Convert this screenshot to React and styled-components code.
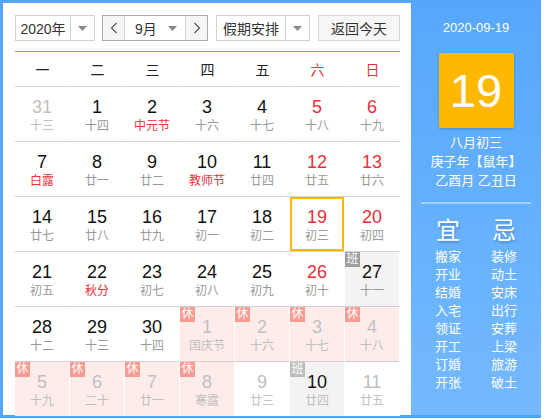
import React from "react";
import styled, { createGlobalStyle } from "styled-components";

const GlobalStyle = createGlobalStyle`
  body {
    margin: 0;
    background: #fff;
    font-family: "Liberation Sans", "Noto Sans CJK SC", sans-serif;
  }
`;

const WEEKDAYS = [
  { label: "一" },
  { label: "二" },
  { label: "三" },
  { label: "四" },
  { label: "五" },
  { label: "六", weekend: true },
  { label: "日", weekend: true },
];

// kind: rest = 休, work = 班 ; other = not in this month
const DAYS = [
  { d: 31, l: "十三", other: true },
  { d: 1, l: "十四" },
  { d: 2, l: "中元节", fest: true },
  { d: 3, l: "十六" },
  { d: 4, l: "十七" },
  { d: 5, l: "十八", red: true },
  { d: 6, l: "十九", red: true },

  { d: 7, l: "白露", fest: true },
  { d: 8, l: "廿一" },
  { d: 9, l: "廿二" },
  { d: 10, l: "教师节", fest: true },
  { d: 11, l: "廿四" },
  { d: 12, l: "廿五", red: true },
  { d: 13, l: "廿六", red: true },

  { d: 14, l: "廿七" },
  { d: 15, l: "廿八" },
  { d: 16, l: "廿九" },
  { d: 17, l: "初一" },
  { d: 18, l: "初二" },
  { d: 19, l: "初三", red: true, today: true },
  { d: 20, l: "初四", red: true },

  { d: 21, l: "初五" },
  { d: 22, l: "秋分", fest: true },
  { d: 23, l: "初七" },
  { d: 24, l: "初八" },
  { d: 25, l: "初九" },
  { d: 26, l: "初十", red: true },
  { d: 27, l: "十一", kind: "work" },

  { d: 28, l: "十二" },
  { d: 29, l: "十三" },
  { d: 30, l: "十四" },
  { d: 1, l: "国庆节", other: true, kind: "rest" },
  { d: 2, l: "十六", other: true, kind: "rest" },
  { d: 3, l: "十七", other: true, kind: "rest" },
  { d: 4, l: "十八", other: true, kind: "rest" },

  { d: 5, l: "十九", other: true, kind: "rest" },
  { d: 6, l: "二十", other: true, kind: "rest" },
  { d: 7, l: "廿一", other: true, kind: "rest" },
  { d: 8, l: "寒露", other: true, kind: "rest" },
  { d: 9, l: "廿三", other: true },
  { d: 10, l: "廿四", other: true, kind: "work" },
  { d: 11, l: "廿五", other: true },
];

const GOOD = ["搬家", "开业", "结婚", "入宅", "领证", "开工", "订婚", "开张"];
const BAD = ["装修", "动土", "安床", "出行", "安葬", "上梁", "旅游", "破土"];

const Caret = () => (
  <svg width="9" height="5" viewBox="0 0 9 5">
    <path d="M0 0 L9 0 L4.5 5 Z" fill="#8a8a8a" />
  </svg>
);

const Chevron = ({ dir }) => (
  <svg width="8" height="12" viewBox="0 0 8 12">
    <path
      d={dir === "left" ? "M6.5 1 L1.5 6 L6.5 11" : "M1.5 1 L6.5 6 L1.5 11"}
      fill="none"
      stroke="#555"
      strokeWidth="1.2"
    />
  </svg>
);

const App = () => {
  return (
    <>
      <GlobalStyle />
      <Frame>
        <Main>
          <Toolbar>
            <Select $width={80}>
              <SelectText>2020年</SelectText>
              <SelectArrow>
                <Caret />
              </SelectArrow>
            </Select>
            <MonthGroup>
              <StepButton>
                <Chevron dir="left" />
              </StepButton>
              <MonthText>
                9月
                <Caret />
              </MonthText>
              <StepButton $right>
                <Chevron dir="right" />
              </StepButton>
            </MonthGroup>
            <Select $width={94}>
              <SelectText>假期安排</SelectText>
              <SelectArrow>
                <Caret />
              </SelectArrow>
            </Select>
            <TodayButton>返回今天</TodayButton>
          </Toolbar>

          <Grid>
            {WEEKDAYS.map((w) => (
              <WeekHead key={w.label} $weekend={w.weekend}>
                {w.label}
              </WeekHead>
            ))}
            {DAYS.map((day, i) => (
              <Cell key={i} $kind={day.kind} $today={day.today}>
                {day.kind && (
                  <Badge $kind={day.kind} $other={day.other}>
                    {day.kind === "rest" ? "休" : "班"}
                  </Badge>
                )}
                <DayNum
                  $red={day.red}
                  $other={day.other && day.kind !== "work"}
                >
                  {day.d}
                </DayNum>
                <Lunar $fest={day.fest} $other={day.other}>
                  {day.l}
                </Lunar>
              </Cell>
            ))}
          </Grid>
        </Main>

        <Side>
          <DateLine>2020-09-19</DateLine>
          <BigDay>19</BigDay>
          <LunarInfo>
            <div>八月初三</div>
            <div>庚子年【鼠年】</div>
            <div>乙酉月 乙丑日</div>
          </LunarInfo>
          <Divider />
          <Advice>
            <AdviceCol>
              <AdviceHead>宜</AdviceHead>
              {GOOD.map((t) => (
                <AdviceItem key={t}>{t}</AdviceItem>
              ))}
            </AdviceCol>
            <AdviceCol>
              <AdviceHead>忌</AdviceHead>
              {BAD.map((t) => (
                <AdviceItem key={t}>{t}</AdviceItem>
              ))}
            </AdviceCol>
          </Advice>
        </Side>
      </Frame>
    </>
  );
};

const Frame = styled.div`
  display: flex;
  width: 541px;
  height: 418px;
  box-sizing: border-box;
  border: 3px solid #56a6fb;
  border-right: none;
  border-bottom-color: #4fa3f5;
`;

const Main = styled.div`
  width: 408px;
  box-sizing: border-box;
  padding: 12px 11px 0 12px;
  background: #fff;
`;

const Toolbar = styled.div`
  display: flex;
  gap: 7px;
  height: 26px;
  margin-bottom: 10px;
  color: #333;
  font-size: 14px;

  & > *:nth-child(n + 3) {
    margin-left: 1px;
  }
`;

const Select = styled.div`
  display: flex;
  width: ${({ $width }) => $width}px;
  box-sizing: border-box;
  border: 1px solid #d2d2d2;
  background: #fff;
`;

const SelectText = styled.div`
  flex: 1;
  display: flex;
  align-items: center;
  justify-content: center;
  border-right: 1px solid #d2d2d2;
`;

const SelectArrow = styled.div`
  width: 23px;
  display: flex;
  align-items: center;
  justify-content: center;
`;

const MonthGroup = styled.div`
  display: flex;
  width: 106px;
  box-sizing: border-box;
  border: 1px solid #ababab;
`;

const StepButton = styled.div`
  width: 21px;
  display: flex;
  align-items: center;
  justify-content: center;
  background: #f5f5f5;
  border-left: ${({ $right }) => ($right ? "1px solid #d2d2d2" : "none")};
  border-right: ${({ $right }) => ($right ? "none" : "1px solid #d2d2d2")};
`;

const MonthText = styled.div`
  flex: 1;
  display: flex;
  align-items: center;
  justify-content: space-between;
  padding: 0 8px 0 10px;
  background: #fff;
`;

const TodayButton = styled.div`
  width: 82px;
  box-sizing: border-box;
  display: flex;
  align-items: center;
  justify-content: center;
  background: #f6f6f6;
  border: 1px solid #d6d6d6;
`;

const Grid = styled.div`
  display: grid;
  grid-template-columns: repeat(7, 55px);
  grid-template-rows: 34px repeat(6, 55px);
  border-top: 1px solid #5aa6f3;
`;

const WeekHead = styled.div`
  display: flex;
  align-items: center;
  justify-content: center;
  font-size: 14px;
  color: ${({ $weekend }) => ($weekend ? "#e8303a" : "#222")};
`;

const Cell = styled.div`
  position: relative;
  display: flex;
  flex-direction: column;
  align-items: center;
  box-sizing: border-box;
  padding-top: 10px;
  border-top: 1px solid #d0d0d0;
  border-right: 1px solid #fff;
  background: ${({ $kind }) =>
    $kind === "rest" ? "#fdecea" : $kind === "work" ? "#f3f3f3" : "#fff"};
  box-shadow: ${({ $today }) => ($today ? "inset 0 0 0 2px #ffb800" : "none")};
`;

const Badge = styled.div`
  position: absolute;
  top: 0;
  left: 0;
  width: 15px;
  height: 15px;
  line-height: 15px;
  text-align: center;
  font-size: 12px;
  color: #fff;
  background: ${({ $kind, $other }) =>
    $kind === "rest" ? "#f79b93" : $other ? "#bdbdbd" : "#9e9e9e"};
`;

const DayNum = styled.div`
  font-size: 18px;
  line-height: 20px;
  color: ${({ $red, $other }) =>
    $other ? "#c0c0c0" : $red ? "#e8303a" : "#111"};
`;

const Lunar = styled.div`
  margin-top: 1px;
  font-size: 12px;
  line-height: 16px;
  color: ${({ $fest, $other }) =>
    $other ? "#c0c0c0" : $fest ? "#e8303a" : "#9a9a9a"};
`;

const Side = styled.div`
  flex: 1;
  margin-top: -3px;
  display: flex;
  flex-direction: column;
  align-items: center;
  color: #fff;
  background: linear-gradient(#56a7fc, #74b9ff);
`;

const DateLine = styled.div`
  margin-top: 19px;
  font-size: 13px;
  line-height: 18px;
`;

const BigDay = styled.div`
  margin-top: 16px;
  width: 75px;
  height: 75px;
  display: flex;
  align-items: center;
  justify-content: center;
  border-radius: 2px;
  background: #ffb800;
  box-shadow: 0 1px 3px rgba(0, 0, 0, 0.2);
  font-size: 47px;
`;

const LunarInfo = styled.div`
  margin-top: 5px;
  font-size: 13px;
  line-height: 19px;
  text-align: center;
`;

const Divider = styled.div`
  margin-top: 12px;
  width: 110px;
  height: 2px;
  background: rgba(255, 255, 255, 0.4);
`;

const Advice = styled.div`
  display: grid;
  grid-template-columns: 56px 56px;
  margin-top: 12px;
`;

const AdviceCol = styled.div`
  display: flex;
  flex-direction: column;
  align-items: center;
`;

const AdviceHead = styled.div`
  font-size: 24px;
  line-height: 30px;
  margin-bottom: 2px;
  text-shadow: 1px 2px 2px rgba(0, 0, 0, 0.2);
`;

const AdviceItem = styled.div`
  font-size: 13px;
  line-height: 18px;
`;

export default App;
